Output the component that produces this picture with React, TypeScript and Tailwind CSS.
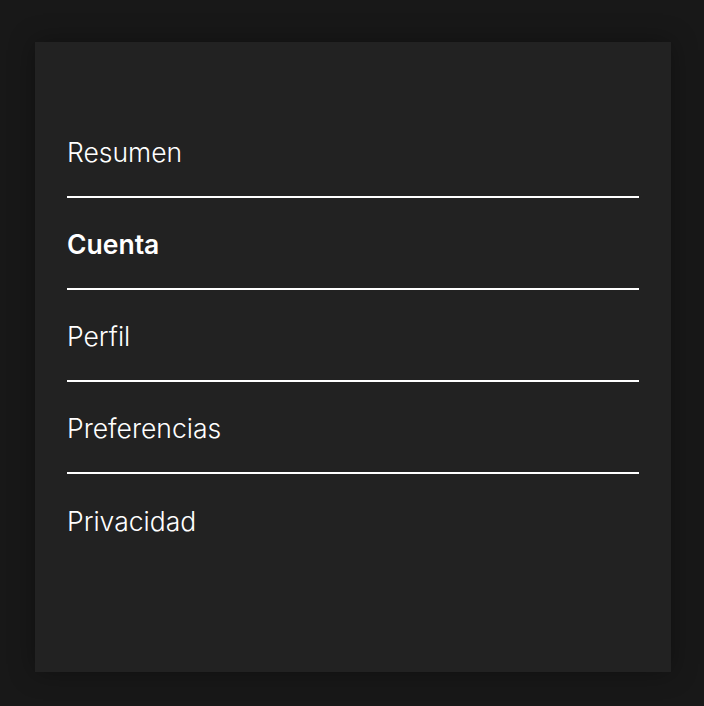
const items = [
  { label: "Resumen", active: false },
  { label: "Cuenta", active: true },
  { label: "Perfil", active: false },
  { label: "Preferencias", active: false },
  { label: "Privacidad", active: false },
];

const App = () => {
  return (
    <div className="min-h-screen w-full bg-[#181818] pt-[42px] pl-[35px] font-['Inter',sans-serif]">
      <div className="w-[636px] h-[630px] bg-[#222222] px-8 pt-16 shadow-[0_0_24px_rgba(0,0,0,0.35)]">
        <ul>
          {items.map((item, i) => (
            <li
              key={item.label}
              className={`flex h-[92px] items-center ${
                i < items.length - 1 ? "border-b-2 border-white" : ""
              }`}
            >
              <span
                className={`pt-[3px] text-[26.5px] leading-none text-white ${
                  item.active ? "font-semibold" : "font-light"
                }`}
              >
                {item.label}
              </span>
            </li>
          ))}
        </ul>
      </div>
    </div>
  );
};

export default App;
